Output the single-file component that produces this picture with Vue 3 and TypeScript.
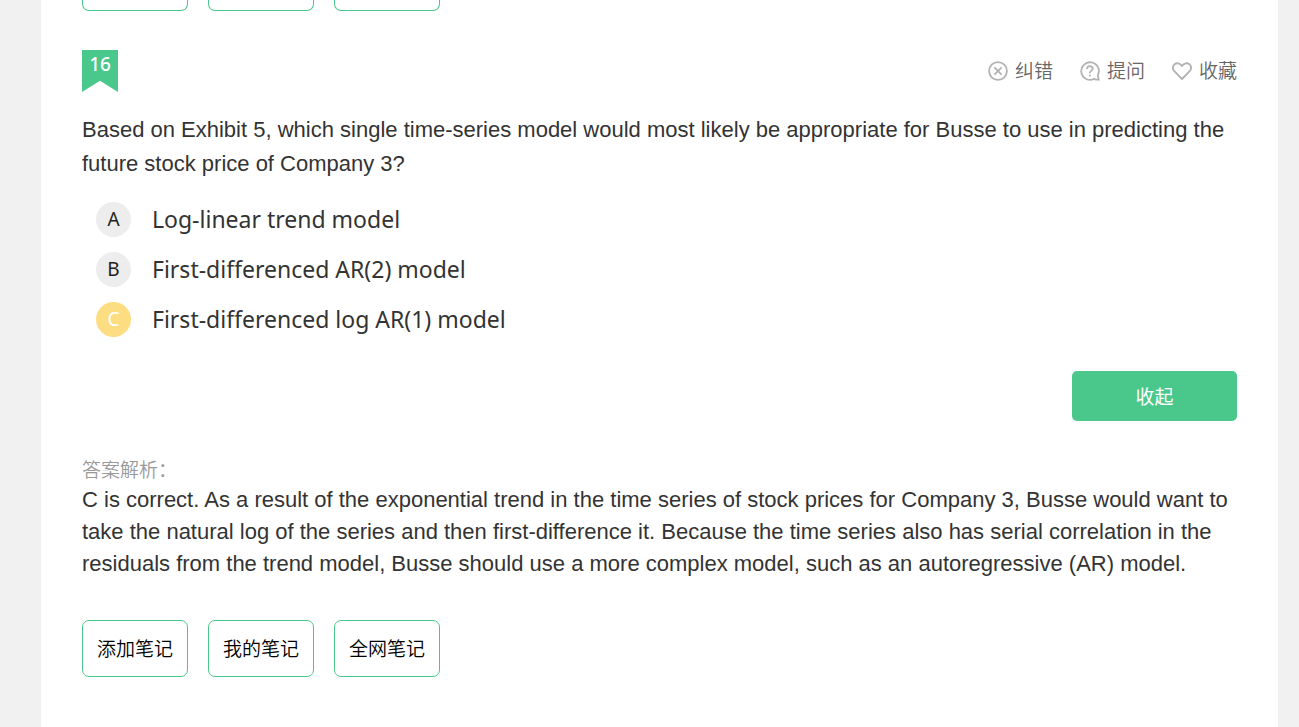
<script setup lang="ts">
import { ref } from 'vue'

interface Option {
  key: string
  text: string
}

const options: Option[] = [
  { key: 'A', text: 'Log-linear trend model' },
  { key: 'B', text: 'First-differenced AR(2) model' },
  { key: 'C', text: 'First-differenced log AR(1) model' },
]
const noteActions: string[] = ['添加笔记', '我的笔记', '全网笔记']

const selected = ref('C')
const expanded = ref(true)
</script>

<template>
  <main class="sheet">
    <div class="previous" aria-hidden="true">
      <span v-for="n in 3" :key="n" class="previous-box"></span>
    </div>

    <article class="question">
      <header class="head">
        <div class="number">16</div>
        <div class="tools">
          <button type="button" class="tool">
            <svg width="20" height="20" viewBox="0 0 20 20" fill="none" stroke="#b3b3b3" stroke-width="1.8">
              <circle cx="10" cy="10" r="8.9" />
              <path d="M6.4 6.4l7.2 7.2M13.6 6.4l-7.2 7.2" />
            </svg>
            <span>纠错</span>
          </button>
          <button type="button" class="tool">
            <svg width="20" height="20" viewBox="0 0 20 20" fill="none" stroke="#b3b3b3" stroke-width="1.8">
              <path d="M17.8 14.2A8.8 8.8 0 1 0 14.2 17.8L15.6 18.7H18.7Z" />
              <path d="M7 8.1C7 6.1 8.2 5.2 9.8 5.2S12.7 6.2 12.7 7.8C12.7 9.8 9.8 10 9.8 12.2" />
              <path d="M9.8 13.6v1.8" />
            </svg>
            <span>提问</span>
          </button>
          <button type="button" class="tool">
            <svg width="20" height="20" viewBox="0 0 20 20" fill="none" stroke="#b3b3b3" stroke-width="1.9" stroke-linejoin="round">
              <path d="M10 18L2.3 10.2C.4 8.2 .5 5.1 2.4 3.4 4.6 1.5 8 2 10 5.1 12 2 15.4 1.5 17.6 3.4 19.5 5.1 19.6 8.2 17.7 10.2Z" />
            </svg>
            <span>收藏</span>
          </button>
        </div>
      </header>

      <p class="stem">
        Based on Exhibit 5, which single time-series model would most likely be appropriate for Busse to use in
        predicting the future stock price of Company 3?
      </p>

      <div class="options" role="radiogroup" aria-label="16">
        <label v-for="option in options" :key="option.key" class="option">
          <input v-model="selected" class="radio" type="radio" name="answer" :value="option.key" />
          <span class="letter">{{ option.key }}</span>
          <span>{{ option.text }}</span>
        </label>
      </div>

      <div class="toggle-row">
        <button type="button" class="toggle" :aria-expanded="expanded" @click="expanded = !expanded">收起</button>
      </div>

      <section v-show="expanded" class="analysis">
        <h2 class="analysis-title">答案解析：</h2>
        <p class="analysis-text">
          C is correct. As a result of the exponential trend in the time series of stock prices for Company 3, Busse
          would want to take the natural log of the series and then first-difference it. Because the time series also
          has serial correlation in the residuals from the trend model, Busse should use a more complex model, such as
          an autoregressive (AR) model.
        </p>
      </section>

      <div class="notes">
        <button v-for="action in noteActions" :key="action" type="button" class="note">{{ action }}</button>
      </div>
    </article>
  </main>
</template>

<style>
body {
  margin: 0;
  background: #f1f1f1;
}
</style>

<style scoped>
.sheet {
  box-sizing: border-box;
  min-height: 100vh;
  margin: 0 21px 0 41px;
  padding: 0 41px 50px;
  background: #fff;
  color: #333;
  font-family: "Noto Sans", "Noto Sans CJK SC", sans-serif;
}
button {
  margin: 0;
  padding: 0 0 2px;
  border: 0;
  background: none;
  font-family: "Noto Sans CJK SC", sans-serif;
  font-size: 19px;
  font-weight: 350;
  cursor: pointer;
}
.previous,
.notes {
  display: flex;
  gap: 20px;
}
.previous-box {
  box-sizing: border-box;
  width: 106px;
  height: 11px;
  border: 1px solid #4ac88c;
  border-top: 0;
  border-radius: 0 0 7px 7px;
}
.question {
  padding-top: 39px;
}
.head {
  display: flex;
  justify-content: space-between;
  align-items: center;
}
.number {
  width: 36px;
  height: 42px;
  background: #4ac88c;
  clip-path: polygon(0 0, 100% 0, 100% 100%, 50% 73%, 0 100%);
  color: #fff;
  font-size: 19px;
  font-weight: 500;
  line-height: 29px;
  text-align: center;
}
.tools {
  display: flex;
  gap: 27px;
}
.tool {
  display: flex;
  align-items: center;
  gap: 7px;
  padding: 0;
  color: #666;
  line-height: 28px;
}
.tool span {
  padding-bottom: 2px;
}
.stem {
  margin: 21px 0;
  font-family: "Liberation Sans", Arial, sans-serif;
  font-size: 22px;
  line-height: 34px;
}
.options {
  display: flex;
  flex-direction: column;
  gap: 15px;
  padding-left: 14px;
}
.option {
  position: relative;
  display: flex;
  align-items: center;
  gap: 21px;
  font-size: 23px;
  line-height: 35px;
  cursor: pointer;
}
.radio {
  position: absolute;
  width: 35px;
  height: 35px;
  margin: 0;
  opacity: 0;
}
.letter {
  width: 35px;
  height: 35px;
  border-radius: 50%;
  background: #ededed;
  color: #222;
  font-size: 19px;
  text-align: center;
}
.radio:checked + .letter {
  background: #fcdd82;
  color: #fff;
}
.toggle-row {
  display: flex;
  justify-content: flex-end;
  margin-top: 34px;
}
.toggle {
  width: 165px;
  height: 50px;
  border-radius: 5px;
  background: #4ac88c;
  color: #fff;
  font-weight: 400;
}
.analysis {
  margin-top: 33px;
}
.analysis-title {
  margin: 0;
  color: #999;
  font-family: "Noto Sans CJK SC", sans-serif;
  font-size: 19px;
  font-weight: 350;
  line-height: 30px;
}
.analysis-text {
  margin: 0;
  font-family: "Liberation Sans", Arial, sans-serif;
  font-size: 22px;
  line-height: 32px;
}
.notes {
  margin-top: 40px;
}
.note {
  width: 106px;
  height: 57px;
  border: 1px solid #4ac88c;
  border-radius: 7px;
  color: #000;
}
</style>
